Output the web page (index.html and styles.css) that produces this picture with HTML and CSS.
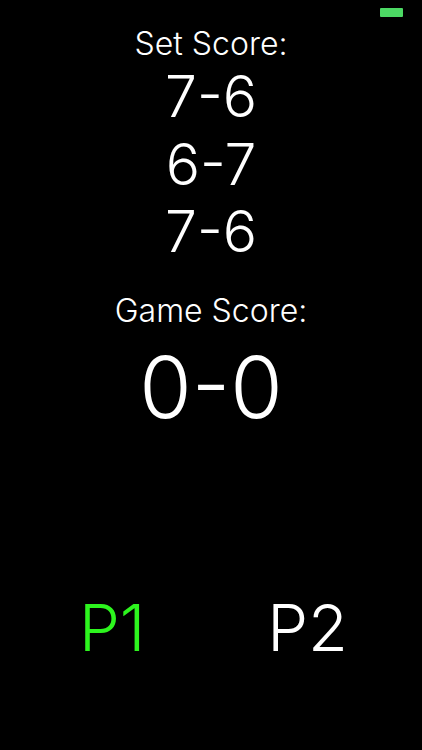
FILE: index.html
```html
<!DOCTYPE html>
<html lang="en">
<head>
<meta charset="UTF-8">
<meta name="viewport" content="width=device-width, initial-scale=1.0">
<title>Score</title>
<link rel="stylesheet" href="styles.css">
</head>
<body>
    <div class="status-bar">
        <div class="battery"></div>
    </div>
    <div class="label">Set Score:</div>
    <div class="set-scores">
        <div class="set-score">7-6</div>
        <div class="set-score">6-7</div>
        <div class="set-score">7-6</div>
    </div>
    <div class="label game-label">Game Score:</div>
    <div class="game-score">0-0</div>
    <div class="players">
        <div class="player active">P1</div>
        <div class="player">P2</div>
    </div>
</body>
</html>
```

FILE: styles.css
```css
body {
    font-family: Inter, sans-serif;
    font-weight: 350;
    margin: 0;
    padding: 0;
    width: 422px;
    height: 750px;
    overflow: hidden;
    background: #000;
    color: #fff;
    text-align: center;
}
.status-bar {
    height: 26px;
    display: flex;
    justify-content: flex-end;
    align-items: flex-start;
    padding-top: 8px;
    padding-right: 19px;
    box-sizing: border-box;
}
.battery {
    width: 23px;
    height: 9px;
    border-radius: 1px;
    background: #4cd964;
}
.label {
    font-size: 32px;
    line-height: 36px;
}
.set-scores {
    margin-top: 1px;
}
.set-score {
    font-size: 57px;
    line-height: 67.5px;
}
.game-label {
    margin-top: 27px;
}
.game-score {
    font-size: 85px;
    line-height: 100px;
    margin-top: 9px;
}
.players {
    display: flex;
    justify-content: space-between;
    padding: 0 74px 0 79px;
    margin-top: 150px;
}
.player {
    font-size: 65px;
    line-height: 80px;
}
.active {
    color: #2df51e;
}
```
